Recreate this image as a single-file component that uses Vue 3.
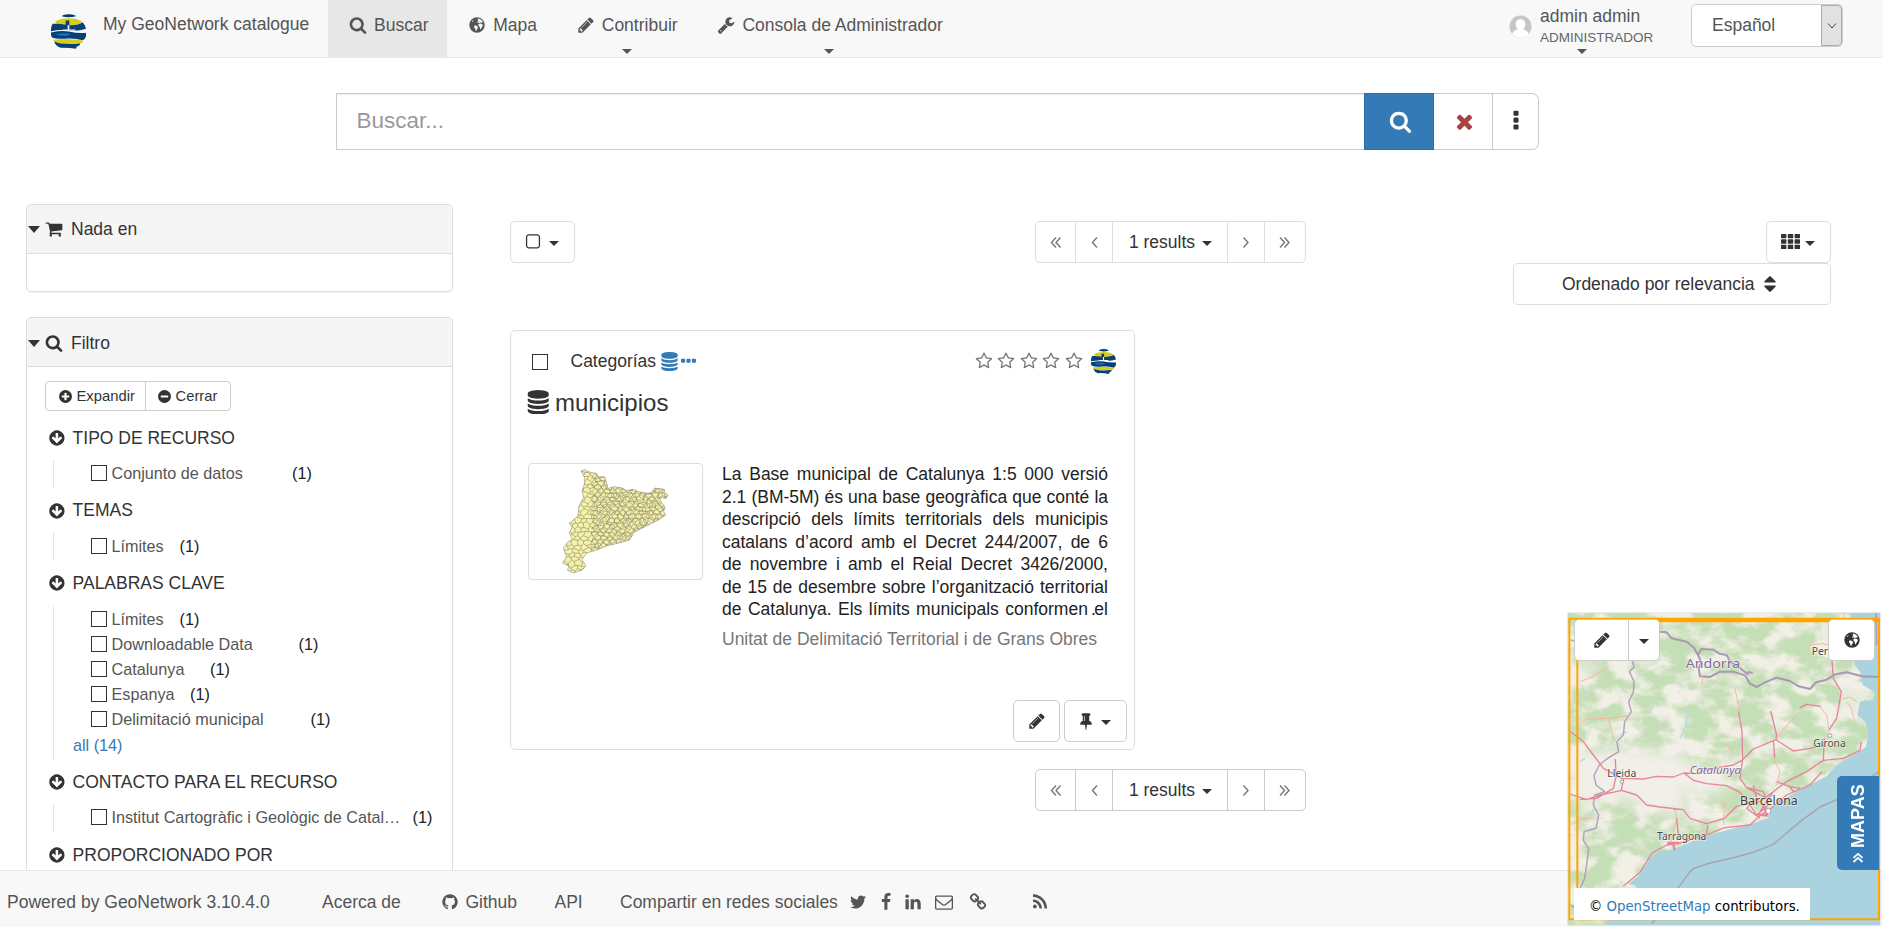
<script setup>
import { h } from 'vue'

const paths = {
  search: 'M1216 832q0-185-131.5-316.5t-316.5-131.5-316.5 131.5-131.5 316.5 131.5 316.5 316.5 131.5 316.5-131.5 131.5-316.5zm512 832q0 52-38 90t-90 38q-54 0-90-38l-343-342q-179 124-399 124-143 0-273.5-55.5t-225-150-150-225-55.5-273.5 55.5-273.5 150-225 225-150 273.5-55.5 273.5 55.5 225 150 150 225 55.5 273.5q0 220-124 399l343 343q37 37 37 90z',
  pencil: 'M491 1536l91-91-235-235-91 91v107h128v128h107zm523-928q0-22-22-22-10 0-17 7l-542 542q-7 7-7 17 0 22 22 22 10 0 17-7l542-542q7-7 7-17zm-54-192l416 416-832 832h-416v-416zm683 96q0 53-37 90l-166 166-416-416 166-165q36-38 90-38 53 0 91 38l235 234q37 39 37 91z',
  wrench: 'M448 1472q0-26-19-45t-45-19-45 19-19 45 19 45 45 19 45-19 19-45zm644-420l-682 682q-37 37-90 37-52 0-91-37l-106-108q-38-36-38-90 0-53 38-91l681-681q39 98 114.5 173.5t173.5 114.5zm634-435q0 39-23 106-47 134-164.5 217.5t-258.5 83.5q-185 0-316.5-131.5t-131.5-316.5 131.5-316.5 316.5-131.5q58 0 121.5 16.5t107.5 46.5q16 11 16 28t-16 28l-293 169v224l193 107q5-3 79-48.5t135.5-81 70.5-35.5q15 0 23.5 10t8.5 25z',
  cart: 'M704 1536q0 52-38 90t-90 38-90-38-38-90 38-90 90-38 90 38 38 90zm896 0q0 52-38 90t-90 38-90-38-38-90 38-90 90-38 90 38 38 90zm128-1088v512q0 24-16.5 42.5t-40.5 21.5l-1044 122q13 60 13 70 0 16-24 64h920q26 0 45 19t19 45-19 45-45 19h-1024q-26 0-45-19t-19-45q0-11 8-31.5t16-36 21.5-40 15.5-29.5l-177-823h-204q-26 0-45-19t-19-45 19-45 45-19h256q16 0 28.5 6.5t19.5 15.5 13 24.5 8 26 5.5 29.5 4.5 26h1201q26 0 45 19t19 45z',
  plus: 'M1344 960v-128q0-26-19-45t-45-19h-256v-256q0-26-19-45t-45-19h-128q-26 0-45 19t-19 45v256h-256q-26 0-45 19t-19 45v128q0 26 19 45t45 19h256v256q0 26 19 45t45 19h128q26 0 45-19t19-45v-256h256q26 0 45-19t19-45zm320-64q0 209-103 385.5t-279.5 279.5-385.5 103-385.5-103-279.5-279.5-103-385.5 103-385.5 279.5-279.5 385.5-103 385.5 103 279.5 279.5 103 385.5z',
  minus: 'M1344 960v-128q0-26-19-45t-45-19h-768q-26 0-45 19t-19 45v128q0 26 19 45t45 19h768q26 0 45-19t19-45zm320-64q0 209-103 385.5t-279.5 279.5-385.5 103-385.5-103-279.5-279.5-103-385.5 103-385.5 279.5-279.5 385.5-103 385.5 103 279.5 279.5 103 385.5z',
  down: 'M1412 897q0-27-18-45l-91-91q-18-18-45-18t-45 18l-189 189v-502q0-26-19-45t-45-19h-128q-26 0-45 19t-19 45v502l-189-189q-19-19-45-19t-45 19l-91 91q-18 18-18 45t18 45l362 362 91 91q18 18 45 18t45-18l91-91 362-362q18-18 18-45zm252-1q0 209-103 385.5t-279.5 279.5-385.5 103-385.5-103-279.5-279.5-103-385.5 103-385.5 279.5-279.5 385.5-103 385.5 103 279.5 279.5 103 385.5z',
  globe: 'M896 128a768 768 0 1 0 0 1536a768 768 0 1 0 0-1536zM1010 250L1180 300L1330 400L1450 540L1500 640L1380 620L1290 660L1190 650L1120 720L1060 700L1090 620L1010 610L960 680L880 640L960 540L1060 500L960 460L1030 380L940 330zM1080 760L1230 740L1400 800L1470 900L1430 1060L1330 1180L1290 1320L1200 1290L1180 1100L1090 1020L1020 900zM620 960L760 930L900 1020L1010 1100L980 1230L880 1330L840 1500L760 1480L720 1280L600 1120zM390 560L470 440L560 400L520 500L440 600z',
  database: 'M896 768q237 0 443-43t325-127v170q0 69-103 128t-280 93.5-385 34.5-385-34.5-280-93.5-103-128v-170q119 84 325 127t443 43zm0 768q237 0 443-43t325-127v170q0 69-103 128t-280 93.5-385 34.5-385-34.5-280-93.5-103-128v-170q119 84 325 127t443 43zm0-384q237 0 443-43t325-127v170q0 69-103 128t-280 93.5-385 34.5-385-34.5-280-93.5-103-128v-170q119 84 325 127t443 43zm0-1152q208 0 385 34.5t280 93.5 103 128v128q0 69-103 128t-280 93.5-385 34.5-385-34.5-280-93.5-103-128v-128q0-69 103-128t280-93.5 385-34.5z',
  star: 'M1201 1004l306-297-422-62-189-382-189 382-422 62 306 297-73 421 378-199 377 199zm527-357q0 22-26 48l-363 354 86 500q1 7 1 20 0 50-41 50-19 0-40-12l-449-236-449 236q-22 12-40 12-21 0-31.5-14.5t-10.5-35.5q0-6 2-20l86-500-364-354q-25-27-25-48 0-37 56-46l502-73 225-455q19-41 49-41t49 41l225 455 502 73q56 9 56 46z',
  times: 'M1490 1322q0 40-28 68l-136 136q-28 28-68 28t-68-28l-294-294-294 294q-28 28-68 28t-68-28l-136-136q-28-28-28-68t28-68l294-294-294-294q-28-28-28-68t28-68l136-136q28-28 68-28t68 28l294 294 294-294q28-28 68-28t68 28l136 136q28 28 28 68t-28 68l-294 294 294 294q28 28 28 68z',
  dotsV: 'M1088 1248v192q0 40-28 68t-68 28h-192q-40 0-68-28t-28-68v-192q0-40 28-68t68-28h192q40 0 68 28t28 68zm0-512v192q0 40-28 68t-68 28h-192q-40 0-68-28t-28-68v-192q0-40 28-68t68-28h192q40 0 68 28t28 68zm0-512v192q0 40-28 68t-68 28h-192q-40 0-68-28t-28-68v-192q0-40 28-68t68-28h192q40 0 68 28t28 68z',
  dotsH: 'M576 736v192q0 40-28 68t-68 28h-192q-40 0-68-28t-28-68v-192q0-40 28-68t68-28h192q40 0 68 28t28 68zm512 0v192q0 40-28 68t-68 28h-192q-40 0-68-28t-28-68v-192q0-40 28-68t68-28h192q40 0 68 28t28 68zm512 0v192q0 40-28 68t-68 28h-192q-40 0-68-28t-28-68v-192q0-40 28-68t68-28h192q40 0 68 28t28 68z',
  square: 'M1312 256h-832q-66 0-113 47t-47 113v832q0 66 47 113t113 47h832q66 0 113-47t47-113v-832q0-66-47-113t-113-47zm288 160v832q0 119-84.5 203.5t-203.5 84.5h-832q-119 0-203.5-84.5t-84.5-203.5v-832q0-119 84.5-203.5t203.5-84.5h832q119 0 203.5 84.5t84.5 203.5z',
  sort: 'M1408 1088q0 26-19 45l-448 448q-19 19-45 19t-45-19l-448-448q-19-19-19-45t19-45 45-19h896q26 0 45 19t19 45zm0-384q0 26-19 45t-45 19h-896q-26 0-45-19t-19-45 19-45l448-448q19-19 45-19t45 19l448 448q19 19 19 45z',
  pin: 'M800 864v-448q0-14-9-23t-23-9-23 9-9 23v448q0 14 9 23t23 9 23-9 9-23zm672 352q0 26-19 45t-45 19h-429l-51 483q-2 12-10.5 20.5t-20.5 8.5h-1q-27 0-32-27l-76-485h-404q-26 0-45-19t-19-45q0-123 78.5-221.5t177.5-98.5v-512q-52 0-90-38t-38-90 38-90 90-38h640q52 0 90 38t38 90-38 90-90 38v512q99 0 177.5 98.5t78.5 221.5z',
  twitter: 'M1684 408q-67 98-162 167 1 14 1 42 0 130-38 259.5t-115.5 248.5-184.5 210.5-258 146-323 54.5q-271 0-496-145 35 4 78 4 225 0 401-138-105-2-188-64.5t-114-159.5q33 5 61 5 43 0 85-11-112-23-185.5-111.5t-73.5-205.5v-4q68 38 146 41-66-44-105-115t-39-154q0-88 44-163 121 149 294.5 238.5t371.5 99.5q-8-38-8-74 0-134 94.5-228.5t228.5-94.5q140 0 236 102 109-21 205-78-37 115-142 178 93-10 186-50z',
  facebook: 'M1343 12v264h-157q-86 0-116 36t-30 108v189h293l-39 296h-254v759h-306v-759h-255v-296h255v-218q0-186 104-288.5t277-102.5q147 0 228 12z',
  linkedin: 'M477 625v991h-330v-991h330zm21-306q1 73-50.5 122t-135.5 49h-2q-82 0-132-49t-50-122q0-74 51.5-122.5t134.5-48.5 133 48.5 51 122.5zm1166 729v568h-329v-530q0-105-40.5-164.5t-126.5-59.5q-63 0-105.5 34.5t-63.5 85.5q-11 30-11 81v553h-329q2-399 2-647t-1-296l-1-48h329v144h-2q20-32 41-56t56.5-52 87-43.5 114.5-15.5q171 0 275 113.5t104 332.5z',
  mail: 'M1664 1504v-768q-32 36-69 66-268 206-426 338-51 43-83 67t-86.5 48.5-102.5 24.5h-2q-48 0-102.5-24.5t-86.5-48.5-83-67q-158-132-426-338-37-30-69-66v768q0 13 9.5 22.5t22.5 9.5h1472q13 0 22.5-9.5t9.5-22.5zm0-1051v-24.5l-.5-13-3-12.5-5.5-9-9-7.5-14-2.5h-1472q-13 0-22.5 9.5t-9.5 22.5q0 168 147 284 193 152 401 317 6 5 35 29.5t46 37.5 44.5 31.5 50.5 27.5 43 9h2q20 0 43-9t50.5-27.5 44.5-31.5 46-37.5 35-29.5q208-165 401-317 54-43 100.5-115.5t46.5-131.5zm128-37v1088q0 66-47 113t-113 47h-1472q-66 0-113-47t-47-113v-1088q0-66 47-113t113-47h1472q66 0 113 47t47 113z',
  link: 'M1520 1216q0-40-28-68l-208-208q-28-28-68-28-42 0-72 32 3 3 19 18.5t21.5 21.5 15 19 13 25.5 3.5 27.5q0 40-28 68t-68 28q-15 0-27.5-3.5t-25.5-13-19-15-21.5-21.5-18.5-19q-33 31-33 73 0 40 28 68l206 207q27 27 68 27 40 0 68-26l147-146q28-28 28-67zm-703-705q0-40-28-68l-206-207q-28-28-68-28-39 0-68 27l-147 146q-28 28-28 67 0 40 28 68l208 208q27 27 68 27 42 0 72-31-3-3-19-18.5t-21.5-21.5-15-19-13-25.5-3.5-27.5q0-40 28-68t68-28q15 0 27.5 3.5t25.5 13 19 15 21.5 21.5 18.5 19q33-31 33-73zm895 705q0 120-85 203l-147 146q-83 83-203 83-121 0-204-85l-206-207q-83-83-83-203 0-123 88-209l-88-88q-86 88-208 88-120 0-204-84l-208-208q-84-84-84-204t85-203l147-146q83-83 203-83 121 0 204 85l206 207q83 83 83 203 0 123-88 209l88 88q86-88 208-88 120 0 204 84l208 208q84 84 84 204z',
  rss: 'M576 1344q0 80-56 136t-136 56-136-56-56-136 56-136 136-56 136 56 56 136zm512 123q2 28-17 48-18 21-47 21h-135q-25 0-43-16.5t-20-41.5q-22-229-184.5-391.5t-391.5-184.5q-25-2-41.5-20t-16.5-43v-135q0-29 21-47 17-17 43-17h5q160 13 306 80.5t259 181.5q114 113 181.5 259t80.5 306zm512 2q2 27-18 47-18 20-46 20h-143q-26 0-44.5-17.5t-19.5-42.5q-12-215-101-408.5t-231.5-336-336-231.5-408.5-102q-25-1-42.5-19.5t-17.5-43.5v-143q0-28 20-46 18-18 44-18h3q262 13 501.5 120t425.5 294q187 186 294 425.5t120 501.5z',
  github: 'M896 128q209 0 385.5 103t279.5 279.5 103 385.5q0 251-146.5 451.5t-378.5 277.5q-27 5-40-7t-13-30q0-3 .5-76.5t.5-134.5q0-97-52-142 57-6 102.5-18t94-39 81-66.5 53-105 20.5-150.5q0-119-79-206 37-91-8-204-28-9-81 11t-92 44l-38 24q-93-26-192-26t-192 26q-16-11-42.5-27t-83.5-38.5-85-13.5q-45 113-8 204-79 87-79 206 0 85 20.5 150t52.5 105 80.5 67 94 39 102.5 18q-39 36-49 103-21 10-45 15t-57 5-65.5-21.5-55.5-62.5q-19-32-48.5-52t-49.5-24l-20-3q-21 0-29 4.5t-5 11.5 9 14 13 12l7 5q22 10 43.5 38t31.5 51l10 23q13 38 44 61.5t67 30 69.5 7 55.5-3.5l23-4q0 38 .5 88.5t.5 54.5q0 18-13 30t-40 7q-232-77-378.5-277.5t-146.5-451.5q0-209 103-385.5t279.5-279.5 385.5-103z',
  grid: 'M60 180h390q60 0 60 60v290q0 60-60 60h-390q-60 0-60-60v-290q0-60 60-60zm641 0h390q60 0 60 60v290q0 60-60 60h-390q-60 0-60-60v-290q0-60 60-60zm641 0h390q60 0 60 60v290q0 60-60 60h-390q-60 0-60-60v-290q0-60 60-60zM60 690h390q60 0 60 60v290q0 60-60 60h-390q-60 0-60-60v-290q0-60 60-60zm641 0h390q60 0 60 60v290q0 60-60 60h-390q-60 0-60-60v-290q0-60 60-60zm641 0h390q60 0 60 60v290q0 60-60 60h-390q-60 0-60-60v-290q0-60 60-60zM60 1200h390q60 0 60 60v290q0 60-60 60h-390q-60 0-60-60v-290q0-60 60-60zm641 0h390q60 0 60 60v290q0 60-60 60h-390q-60 0-60-60v-290q0-60 60-60zm641 0h390q60 0 60 60v290q0 60-60 60h-390q-60 0-60-60v-290q0-60 60-60z',
}

const Icon = (props) =>
  h('svg', { viewBox: '0 0 1792 1792', class: 'icon' }, [
    h('path', { d: paths[props.name], 'fill-rule': props.name === 'globe' ? 'evenodd' : 'nonzero' }),
  ])
Icon.props = ['name']

const chevrons = {
  first: 'M7 2.5L2.5 7.5L7 12.5M11.5 2.5L7 7.5L11.5 12.5',
  prev: 'M9 2.5L4.5 7.5L9 12.5',
  next: 'M4.5 2.5L9 7.5L4.5 12.5',
  last: 'M2 2.5L6.5 7.5L2 12.5M6.5 2.5L11 7.5L6.5 12.5',
}
const Chevron = (props) =>
  h('svg', { viewBox: '0 0 14 15', class: 'chevron' }, [h('path', { d: chevrons[props.name] })])
Chevron.props = ['name']

const Logo = () =>
  h('svg', { viewBox: '153 42 105 104', class: 'logo' }, [
    h('path', { d: 'M187 46Q206 38 226 46L226 49Q206 54 187 49Z', fill: '#063a70' }),
    h('path', { d: 'M165 64Q180 54 206 54Q232 54 246 64L240 71Q206 82 170 71Z', fill: '#d3cf1c' }),
    h('path', { d: 'M158 71Q175 69 197 74L197 61L208 61L208 75Q235 76 248 66Q256 74 258 86Q235 94 206 91Q180 87 153 93Q152 80 158 71Z', fill: '#073f78' }),
    h('path', { d: 'M203 75L208 75L208 91L203 91ZM188 88L226 88L226 92L188 92Z', fill: '#fff' }),
    h('path', { d: 'M153 97Q185 90 206 94Q235 100 258 98L258 108Q256 116 248 120Q225 114 206 115Q170 118 156 112Q152 104 153 97Z', fill: '#073f78' }),
    h('path', { d: 'M167 103Q190 97 212 101L205 106Q185 108 167 103Z', fill: '#1c74b8' }),
    h('path', { d: 'M160 119Q206 113 250 121Q248 128 242 130Q206 134 172 130Q163 127 160 119Z', fill: '#d3cf1c' }),
    h('path', { d: 'M162 124Q185 135 240 130Q242 136 230 140L228 146Q206 142 182 143Q168 138 162 124Z', fill: '#073f78' }),
  ])

const groups = [
  { title: 'TIPO DE RECURSO', items: [['Conjunto de datos', 180.5]] },
  { title: 'TEMAS', items: [['Límites', 68]] },
  {
    title: 'PALABRAS CLAVE',
    more: 'all (14)',
    items: [['Límites', 68], ['Downloadable Data', 187], ['Catalunya', 98.5], ['Espanya', 78.5], ['Delimitació municipal', 199]],
  },
  { title: 'CONTACTO PARA EL RECURSO', items: [['Institut Cartogràfic i Geològic de Catal…', 301]] },
  { title: 'PROPORCIONADO POR', items: [] },
]

const abstract = [
  'La Base municipal de Catalunya 1:5 000 versió',
  '2.1 (BM-5M) és una base geogràfica que conté la',
  'descripció dels límits territorials dels municipis',
  'catalans d’acord amb el Decret 244/2007, de 6',
  'de novembre i amb el Reial Decret 3426/2000,',
  'de 15 de desembre sobre l’organització territorial',
  'de Catalunya. Els límits municipals conformen el',
]

// Irregular honeycomb standing in for municipal boundaries.
const rnd = (a, b) => {
  const s = Math.sin(a * 127.1 + b * 311.7) * 43758.5453
  return s - Math.floor(s)
}
const honeycomb = (x0, w, hgt, seed) => {
  const node = (i, j) => {
    const lift = (i + j) % 2 === 0 ? 0.2 : -0.2
    const x = x0 + i * w + (rnd(i + seed, j) - 0.5) * w * 0.9
    const y = 80 + j * hgt + (lift + (rnd(i + 50, j + seed) - 0.5) * 0.7) * hgt
    return `${x.toFixed(1)} ${y.toFixed(1)}`
  }
  let d = ''
  for (let j = 0; j * hgt < 330; j++) {
    for (let i = 0; x0 + i * w < 420; i++) {
      d += `M${node(i, j)}L${node(i + 1, j)}`
      if ((i + j) % 2 === 0) d += `M${node(i, j)}L${node(i, j + 1)}`
    }
  }
  return d
}
const mesh = honeycomb(150, 8, 13, 3)
const denseMesh = honeycomb(225, 7, 11, 11)
const region = 'M198 90L208 86L214 92L236 98L240 108L256 108L262 130L264 144L278 138L300 142L310 150L326 146L342 154L362 158L372 156L380 142L404 146L404 156L413 164L408 174L392 170L396 186L406 200L402 214L407 224L388 240L362 256L330 276L318 300L296 308L262 318L238 330L212 340L200 360L210 378L200 392L178 401L164 392L168 380L152 370L162 352L154 324L164 308L176 298L168 278L176 262L168 250L182 236L190 228L192 200L204 170L200 150L206 130L206 110Z'

const pagerCells = ['first', 'prev', null, 'next', 'last']
</script>

<template>
  <div class="page">
    <header class="navbar">
      <a class="brand"><Logo /><span>My GeoNetwork catalogue</span></a>
      <a class="tab active"><Icon name="search" />Buscar</a>
      <a class="tab"><Icon name="globe" />Mapa</a>
      <a class="tab"><Icon name="pencil" />Contribuir<i class="caret under" /></a>
      <a class="tab"><Icon name="wrench" />Consola de Administrador<i class="caret under" /></a>
      <div class="user">
        <svg class="avatar" viewBox="0 0 24 24">
          <circle cx="12" cy="12" r="11.5" fill="#c6c6c6" />
          <path d="M12 4.2a5 5.2 0 0 1 5 5.4c0 2-.7 3.8-2 4.7 0 1.6 5 1.5 5.5 5.5a11.5 11.5 0 0 1-17 0c.5-4 5.5-3.9 5.5-5.5-1.3-.9-2-2.7-2-4.7a5 5.2 0 0 1 5-5.4z" fill="#fff" />
        </svg>
        <div class="who"><span>admin admin</span><small>ADMINISTRADOR</small></div>
        <i class="caret under" />
      </div>
      <div class="lang">
        <span>Español</span>
        <b><svg viewBox="0 0 10 6"><path d="M1 .5L5 5L9 .5" /></svg></b>
      </div>
    </header>

    <div class="searchbar">
      <div class="query">Buscar...</div>
      <div class="go"><Icon name="search" /></div>
      <div class="reset"><Icon name="times" /></div>
      <div class="more"><Icon name="dotsV" /></div>
    </div>

    <div class="body">
      <aside>
        <section class="panel">
          <h4><i class="caret big" /><Icon name="cart" />Nada en</h4>
          <div class="blank" />
        </section>
        <section class="panel filter">
          <h4><i class="caret big" /><Icon name="search" />Filtro</h4>
          <div class="toggles">
            <span><Icon name="plus" />Expandir</span><span><Icon name="minus" />Cerrar</span>
          </div>
          <div v-for="g in groups" :key="g.title" class="group">
            <h5><Icon name="down" />{{ g.title }}</h5>
            <ul v-if="g.items.length">
              <li v-for="[label, width] in g.items" :key="label">
                <i class="box" /><span :style="{ width: width + 'px' }">{{ label }}</span><em>(1)</em>
              </li>
              <li v-if="g.more" class="all">{{ g.more }}</li>
            </ul>
          </div>
        </section>
      </aside>

      <main>
        <div class="toolbar">
          <div class="btn select"><Icon name="square" /><i class="caret" /></div>
          <div class="pager">
            <span v-for="(p, i) in pagerCells" :key="i" :class="{ mid: !p }">
              <Chevron v-if="p" :name="p" /><template v-else>1 results<i class="caret" /></template>
            </span>
          </div>
          <div class="right">
            <div class="btn view"><Icon name="grid" /><i class="caret" /></div>
            <div class="btn order">Ordenado por relevancia<Icon name="sort" /></div>
          </div>
        </div>

        <article class="card">
          <div class="meta">
            <i class="box" /><span class="cat">Categorías</span>
            <Icon class="blue" name="database" /><Icon class="blue" name="dotsH" />
            <div class="stars"><Icon v-for="n in 5" :key="n" name="star" /></div>
            <Logo />
          </div>
          <h3><Icon name="database" />municipios</h3>
          <div class="content">
            <div class="thumb">
              <svg viewBox="69 69 428 350" preserveAspectRatio="none">
                <clipPath id="region"><path :d="region" /></clipPath>
                <path :d="region" fill="#f5f2a8" />
                <path :d="mesh" class="mesh" clip-path="url(#region)" />
                <path :d="denseMesh" class="mesh dense" clip-path="url(#region)" />
                <path :d="region" class="coast" />
              </svg>
            </div>
            <div class="text">
              <p v-for="line in abstract" :key="line">{{ line }}</p>
              <i class="fade">.</i>
              <div class="org">Unitat de Delimitació Territorial i de Grans Obres</div>
            </div>
          </div>
          <div class="actions">
            <div class="btn edit"><Icon name="pencil" /></div>
            <div class="btn pinned"><Icon name="pin" /><i class="caret" /></div>
          </div>
        </article>

        <div class="pager lower">
          <span v-for="(p, i) in pagerCells" :key="i" :class="{ mid: !p }">
            <Chevron v-if="p" :name="p" /><template v-else>1 results<i class="caret" /></template>
          </span>
        </div>
      </main>
    </div>

    <footer>
      <span class="f1">Powered by GeoNetwork 3.10.4.0</span>
      <span class="f2">Acerca de</span>
      <span class="f3"><Icon name="github" />Github</span>
      <span class="f4">API</span>
      <span class="f5">Compartir en redes sociales</span>
      <span class="social">
        <Icon name="twitter" /><Icon name="facebook" /><Icon name="linkedin" /><Icon name="mail" /><Icon name="link" />
      </span>
      <Icon class="feed" name="rss" />
    </footer>

    <div class="minimap">
      <svg class="tiles" viewBox="24 24 936 936">
        <defs>
          <filter id="woods" x="0" y="0" width="100%" height="100%" color-interpolation-filters="sRGB">
            <feTurbulence type="fractalNoise" baseFrequency="0.013 0.02" numOctaves="6" seed="12" />
            <feColorMatrix values="0 0 0 0 .77  0 0 0 0 .87  0 0 0 0 .71  4 0 0 0 -1.4" />
          </filter>
          <filter id="soft"><feGaussianBlur stdDeviation="22" /></filter>
        </defs>
        <rect x="24" y="24" width="936" height="936" fill="#f1efe6" />
        <rect x="24" y="24" width="936" height="936" filter="url(#woods)" />
        <path class="plain" d="M30 440L180 430L360 440L420 490L520 530L480 570L360 560L400 640L280 620L180 580L60 610L30 560Z" filter="url(#soft)" />
        <path class="plain" d="M830 220L950 240L900 300L890 350L850 330L840 270Z M780 50L880 50L900 140L790 130Z" opacity=".75" />
        <path class="plain" d="M30 60L80 60L120 200L60 260L30 240Z" opacity=".5" filter="url(#soft)" />
        <g class="river">
          <path d="M272 315L286 290M360 400L376 365L386 315M60 470L75 460M70 650L105 610M180 390L200 380M64 240L76 262" />
        </g>
        <path class="sea" d="M870 24L880 60L876 120L884 180L904 206L908 240L944 260L940 284L900 290L892 330L916 350L926 385L918 425L886 448L830 480L802 512L740 545L690 572L640 600L624 640L580 655L500 676L440 692L380 716L340 734L300 738L270 760L236 812L205 838L226 840L232 856L190 890L150 940L130 960L960 960L960 24Z" />
        <g class="border">
          <path d="M300 80L320 82L335 100L380 110L402 128L414 150L424 172L416 190L420 214L450 216L480 200L520 200L556 212L570 236L590 246L615 232L650 218L690 228L716 244L750 252L768 232L800 224L826 208L860 202L906 214L958 216M414 150L424 132L460 134L478 146L500 150L510 170L536 186L566 210M562 200L578 204" />
          <path class="thin" d="M216 166L222 186L208 200L222 230L220 262L206 290L214 320L194 350L190 390L170 410L176 440L140 462L118 480L102 512L108 540L134 560L104 570L100 600L116 630L108 670L72 680L70 706L86 730L80 780L74 820L60 850M32 900L60 920M32 104L44 110" />
          <path class="thin" d="M276 956L390 800L402 790L450 774L520 758L580 742L640 718L680 684L720 650L780 606L830 584M880 546L958 500M948 24L950 120" />
        </g>
        <g class="minor">
          <path d="M60 230L90 218L140 190M50 362L80 342L145 340L205 332M145 340L160 400L180 420M524 248L536 300L538 340M490 410L520 440M344 612L350 640L335 700L330 720M430 215L424 240M520 95L530 105M745 120L790 116L830 130M846 282L870 276L890 290M860 290L874 310L884 350M780 304L800 330L806 370M656 390L700 340L720 320M100 640L60 640L40 655M640 460L660 500L650 540M494 588L490 660M130 956L150 940M850 24L860 60" />
        </g>
        <g class="road">
          <path d="M32 380L70 410L100 450L130 490L186 520L250 522L290 514L340 516L372 504L410 506L440 494L520 480L546 466L580 432L648 404L650 390L640 350L632 318M648 404L700 438L750 430L790 420M536 320L546 380L548 460L540 520L560 548L600 570L620 580M372 504L400 526L440 536L500 542L540 562L570 600M190 520L184 556L230 570L260 600L300 606L370 614L390 640L440 656L494 640L530 604L600 590L640 560L680 530L740 500L790 466L850 460L900 436L904 410M793 400L790 466M32 568L80 584L120 570L186 556M166 462L168 516L160 550L110 580L60 584M806 376L830 340L844 260L820 220L816 166M444 660L438 690L494 668L570 660L600 632L626 616L680 570L750 540L786 500M640 404L644 458M370 614L340 612M350 640L356 700M560 548L610 560L626 600L590 630L570 600M580 540L590 580L560 610L600 640M720 308L740 298L782 304M640 560L600 620M650 530L690 545L720 550M690 545L700 560M434 690L360 714L320 720L276 744L240 802L190 844" />
          <path class="thick" d="M322 714L358 714M592 628L622 632L610 600M340 720L344 736" />
        </g>
        <g class="town">
          <circle cx="186" cy="530" r="5" /><circle cx="810" cy="392" r="5.5" /><circle cx="625" cy="618" r="8" />
        </g>
        <g class="labels">
          <text x="377" y="189" class="admin" textLength="164" lengthAdjust="spacingAndGlyphs">Andorra</text>
          <text x="389" y="507" class="admin it" textLength="154" lengthAdjust="spacingAndGlyphs">Catalunya</text>
          <text x="755" y="149" textLength="49" lengthAdjust="spacingAndGlyphs">Per</text>
          <text x="760" y="426" textLength="97" lengthAdjust="spacingAndGlyphs">Girona</text>
          <text x="142" y="516" textLength="87" lengthAdjust="spacingAndGlyphs">Lleida</text>
          <text x="540" y="601" class="city" textLength="173" lengthAdjust="spacingAndGlyphs">Barcelona</text>
          <text x="291" y="704" textLength="148" lengthAdjust="spacingAndGlyphs">Tarragona</text>
        </g>
        <path class="extent" d="M27 41H957M27 943H957M957 40V945M28 40V945M52 44V860" />
        <path class="extent wide" d="M52 46H957" />
      </svg>
      <div class="map-btns"><span class="m1"><Icon name="pencil" /></span><span class="m2"><i class="caret" /></span></div>
      <div class="map-globe"><Icon name="globe" /></div>
      <div class="credit">© <a>OpenStreetMap</a> contributors.</div>
      <div class="maps-tab"><Chevron name="last" /><b>MAPAS</b></div>
    </div>
  </div>
</template>

<style>
body { background: #fff; }
</style>

<style scoped>
* { box-sizing: border-box; }
.page {
  position: relative;
  height: 927px;
  overflow: hidden;
  font: 17.5px/25px "Liberation Sans", Arial, sans-serif;
  color: #333;
}
.icon { width: 18px; height: 18px; fill: currentColor; flex: none; display: block; }
.chevron { width: 14px; height: 15px; fill: none; stroke: #777; stroke-width: 1.4; }
.caret {
  display: inline-block;
  border: 5px solid transparent;
  border-top-color: currentColor;
  border-bottom: 0;
}
h3, h4, h5, ul, p { margin: 0; padding: 0; font-weight: normal; font-size: inherit; list-style: none; }

.navbar {
  height: 58px;
  display: flex;
  background: #f8f8f8;
  border-bottom: 1px solid #e7e7e7;
  color: #555;
}
.brand { width: 328px; padding-left: 51px; display: flex; }
.brand span { margin: 12px 0 0 17px; }
.logo { width: 35px; height: 35px; margin-top: 14px; flex: none; }
.tab { position: relative; height: 57px; padding: 12.5px 18.75px 0 21px; display: flex; }
.tab .icon { margin: 3.5px 7px 0 0; }
.active { background: #e7e7e7; }
.under { position: absolute; bottom: 3px; left: 50%; margin-left: -4.5px; }
.user { position: relative; display: flex; margin-left: auto; width: 145px; }
.user .under { left: 72.5px; }
.avatar { width: 23px; height: 23px; margin-top: 15px; }
.who { margin: 3.5px 0 0 8px; display: flex; flex-direction: column; white-space: nowrap; }
.who small { font-size: 13.5px; line-height: 18px; color: #666; }
.lang {
  display: flex;
  width: 152px;
  height: 43px;
  margin: 4px 40px 0 37px;
  background: #fff;
  border: 1px solid #ccc;
  border-radius: 5px;
}
.lang span { flex: 1; padding: 8px 0 0 20px; }
.lang b { width: 21px; background: #e1e1e1; border: 1px solid #adadad; border-radius: 0 4px 4px 0; padding: 14px 5px; display: flex; align-items: center; }
.lang svg { width: 10px; height: 6px; fill: none; stroke: #444; flex: none; }

.searchbar { display: flex; height: 57px; width: 1203px; margin: 35px 0 0 336px; }
.searchbar > div { border: 1px solid #ccc; display: flex; align-items: center; justify-content: center; }
.searchbar > .query { flex: 1; justify-content: flex-start; padding: 0 0 2px 19.5px; font-size: 22.5px; color: #999; border-right: 0; box-shadow: inset 0 1px 1px rgba(0, 0, 0, .075); }
.searchbar > .go { width: 70px; background: #337ab7; border-color: #2e6da4; color: #fff; padding-left: 2px; }
.searchbar > .reset { width: 59px; color: #a94442; border-left: 0; padding-left: 2px; }
.searchbar > .more { width: 46px; border-left: 0; border-radius: 0 7px 7px 0; padding-left: 1px; }
.searchbar .icon { width: 23px; height: 23px; }
.searchbar .more .icon { width: 24px; height: 24px; margin-top: -1px; }

.body { display: flex; align-items: flex-start; }
aside { width: 427px; margin: 54px 57px 0 26px; flex: none; }
.panel { border: 1px solid #ddd; border-radius: 5px; box-shadow: 0 1px 1px rgba(0, 0, 0, .05); }
.panel h4 { height: 49px; background: #f5f5f5; border-bottom: 1px solid #ddd; display: flex; align-items: center; padding-left: 1px; border-radius: 4px 4px 0 0; }
.panel h4 .icon { margin: 0 8.5px 0 4.5px; }
.caret.big { border-width: 7px 6px 0; }
.blank { height: 37px; }
.filter { margin-top: 25px; height: 700px; }
.filter h4 { padding-top: 2px; }
.toggles { display: flex; margin: 14px 0 3.5px 18px; height: 30px; font-size: 14.8px; }
.toggles span { display: flex; align-items: center; border: 1px solid #ccc; border-radius: 4px 0 0 4px; width: 101px; padding-left: 12px; }
.toggles span + span { width: 86px; margin-left: -1px; border-radius: 0 4px 4px 0; padding-left: 11px; }
.toggles .icon { width: 15px; height: 15px; margin-right: 3.5px; }
.group h5 { height: 45.75px; padding: 11px 0 0 20.5px; display: flex; }
.group h5 .icon { margin: 3.2px 7.3px 0 0; width: 17.8px; }
.group ul { margin-left: 26px; border-left: 1px dotted #ccc; font-size: 16.2px; padding-bottom: 2px; }
.group li { height: 25.15px; line-height: 25px; display: flex; align-items: center; padding-left: 37px; color: #555; white-space: nowrap; }
.group li span { margin-left: 4.5px; flex: none; padding-top: 1px; }
.group li em { font-style: normal; color: #222; padding-top: 1px; }
.group li.all { padding: 2px 0 0 19px; color: #337ab7; }
.box { width: 16px; height: 16px; border: 1px solid #333; background: #fff; flex: none; }

main { width: 1321px; margin-top: 71px; }
.toolbar { display: flex; height: 109px; align-items: flex-start; }
.btn { height: 42px; border: 1px solid #ddd; border-radius: 5px; background: #fff; display: flex; align-items: center; justify-content: center; }
.select { width: 65px; padding-right: 2px; }
.select .icon { margin-right: 6.5px; margin-top: -1px; }
.select .caret, .view .caret { margin-top: 2px; }
.pager { display: flex; width: 271px; height: 42px; margin-left: 460px; border: 1px solid #ddd; border-radius: 5px; }
.pager span { width: 37px; display: flex; align-items: center; justify-content: center; border-left: 1px solid #ddd; }
.pager span:first-child { border: 0; width: 39px; }
.pager span:nth-child(2) { padding-left: 2px; }
.pager span:last-child { width: 41px; }
.pager .mid { flex: 1; padding-left: 1px; }
.pager .caret { margin: 2px 0 0 7px; }
.right { margin-left: auto; display: flex; flex-direction: column; align-items: flex-end; }
.view { width: 65px; padding-right: 2px; }
.view .icon { width: 19px; height: 19px; margin-right: 5px; margin-top: -1px; }
.order { width: 318px; padding-right: 2px; }
.order .icon { width: 20px; height: 20px; margin-left: 5.5px; }

.card { position: relative; width: 625px; height: 420px; border: 1px solid #ddd; border-radius: 5px; }
.meta { display: flex; align-items: center; padding: 13px 18px 0 21px; height: 47px; }
.meta .cat { margin: 0 3.5px 0 22.5px; }
.meta .box { margin-top: 2px; }
.blue { color: #337ab7; width: 19px; height: 19px; }
.stars { display: flex; gap: 4.5px; margin: 0 8.5px 0 auto; color: #777; }
.meta .logo { width: 25px; height: 25px; margin: 0; }
.card h3 { display: flex; align-items: center; font-size: 24px; height: 30px; margin: 9px 0 0 15px; }
.card h3 .icon { width: 24.5px; height: 24.5px; margin-right: 4.5px; }
.content { display: flex; margin: 46px 0 0 17px; }
.thumb { width: 175px; height: 117px; border: 1px solid #ddd; border-radius: 4px; }
.thumb svg { display: block; width: 173px; height: 115px; }
.mesh { fill: none; stroke: #8d8b72; stroke-width: 1.7; }
.mesh.dense { stroke-width: 1.7; opacity: .85; }
.coast { fill: none; stroke: #8a887a; stroke-width: 1.5; }
.text { position: relative; width: 386px; margin-left: 19px; color: #222; }
.text p { line-height: 22.5px; white-space: nowrap; text-align-last: justify; }
.fade { position: absolute; left: 369px; top: 135px; line-height: 22.5px; font-style: normal; }
.org { margin-top: 6px; color: #777; white-space: nowrap; }
.actions { position: absolute; right: 7px; bottom: 7px; display: flex; gap: 4px; }
.actions .btn { border-color: #ccc; }
.edit { width: 47px; }
.pinned { width: 63px; padding-right: 3px; }
.pinned .caret { margin: 2px 0 0 6px; }
.lower, .lower span { border-color: #ccc; }
.lower { margin: 19px 0 0 525px; }

footer {
  position: absolute;
  inset: 870px 0 auto 0;
  height: 57px;
  background: #f8f8f8;
  border-top: 1px solid #e7e7e7;
  display: flex;
  padding: 18.5px 0 0 7px;
  color: #555;
  white-space: nowrap;
}
footer .icon { margin-top: 3px; }
.f1 { width: 315px; }
.f2 { width: 119px; }
.f3 { display: flex; width: 113.5px; }
.f3 .icon { margin: 3px 7px 0 -.5px; }
.f4 { width: 65.5px; }
.f5 { width: 229px; }
.social { display: flex; gap: 9.7px; width: 181.5px; }
.social .icon:nth-child(4) { margin-left: 2.5px; }
.social .icon:nth-child(5) { margin-left: 7px; }

.minimap { position: absolute; left: 1568px; top: 613px; width: 312px; height: 312px; box-shadow: 0 0 1px #888; overflow: hidden; }
.tiles { display: block; width: 312px; height: 312px; }
.tiles path { fill: none; }
.tiles .plain { fill: #f2efe9; }
.tiles .sea { fill: #aad3df; }
.river { stroke: #b5dcea; stroke-width: 4; }
.border { stroke: #a998b5; stroke-width: 6; stroke-linejoin: round; }
.border .thin { stroke-width: 4.5; opacity: .85; }
.minor { stroke: #f6b9a0; stroke-width: 3; }
.road { stroke: #e8839c; stroke-width: 4; stroke-linejoin: round; }
.road .thick { stroke-width: 7; }
.town circle { fill: #fff; stroke: #777; stroke-width: 2; }
.labels { font: 31px "Noto Sans", sans-serif; fill: #484848; paint-order: stroke; stroke: rgba(255, 255, 255, .6); stroke-width: 4px; }
.labels .admin { fill: #85689a; font-size: 39px; }
.labels .it { font-style: italic; font-size: 32px; }
.labels .city { font-size: 36px; fill: #3c3c3c; }
.tiles .extent { stroke: orange; stroke-width: 6; }
.tiles .extent.wide { stroke-width: 12; }
.map-btns, .map-globe { position: absolute; top: 6px; height: 42px; background: #fff; border: 1px solid #ccc; border-radius: 5px; display: flex; }
.map-btns { left: 6px; width: 86px; }
.map-btns span { display: flex; align-items: center; justify-content: center; }
.m1 { width: 54px; border-right: 1px solid #ccc; }
.map-btns .m2 { flex: 1; padding-top: 3px; }
.map-globe { right: 5px; width: 47px; align-items: center; justify-content: center; }
.credit { position: absolute; left: 6px; top: 275px; width: 236px; height: 32px; padding: 5.5px 0 0 15px; background: #fff; color: #000; font: 13.3px/25px "DejaVu Sans", Verdana, sans-serif; white-space: nowrap; }
.credit a { color: #337ab7; }
.maps-tab { position: absolute; left: 269px; top: 163px; width: 42px; height: 94px; background: #337ab7; color: #fff; border-radius: 0 5px 5px 0; writing-mode: vertical-rl; transform: rotate(180deg); display: flex; align-items: center; padding-top: 5px; gap: 2px; font-size: 18px; }
.maps-tab .chevron { stroke: #fff; transform: rotate(90deg) scale(.9); stroke-width: 2; }
</style>
